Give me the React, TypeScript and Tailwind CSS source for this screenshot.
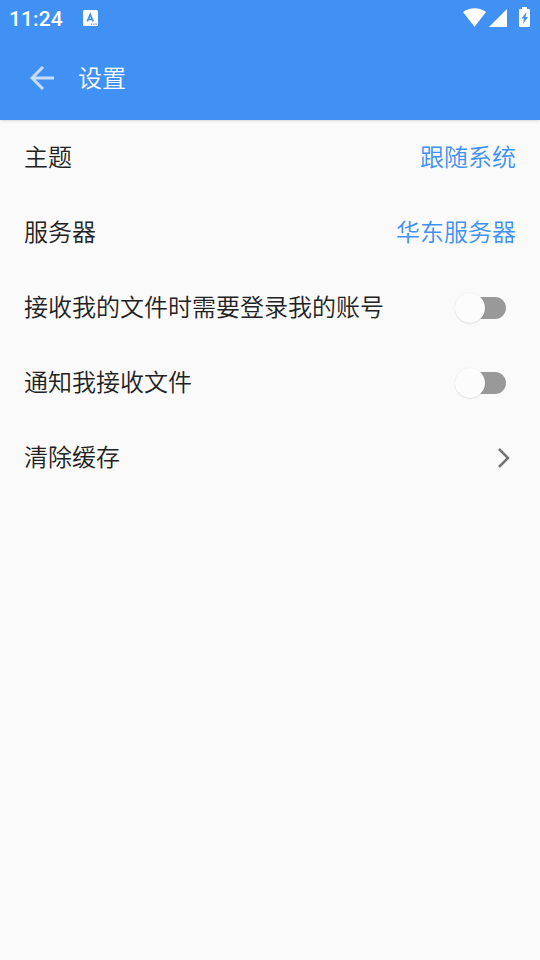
const FONT = "font-[Roboto,'Noto_Sans_CJK_SC',sans-serif]";

type Row = {
  label: string;
  value?: string;
  kind: "value" | "switch" | "link";
};

const ROWS: Row[] = [
  { label: "主题", value: "跟随系统", kind: "value" },
  { label: "服务器", value: "华东服务器", kind: "value" },
  { label: "接收我的文件时需要登录我的账号", kind: "switch" },
  { label: "通知我接收文件", kind: "switch" },
  { label: "清除缓存", kind: "link" },
];

function StatusBar() {
  return (
    <div className="flex h-9 items-center pl-[9px] pr-2.5 text-white">
      <span className="pt-px text-[21px] font-medium leading-9 tracking-[0.1px]">11:24</span>
      <svg className="ml-5 h-4 w-[15px]" viewBox="0 0 15 16">
        <rect width="15" height="16" rx="1.5" fill="#fff" />
        <path d="M4.200 11.500 7.200 4.500l3 7M5.300 9.300h3.800" fill="none" stroke="#4191f4" strokeWidth="1.8" />
        <path d="M8 13.500h1.200v1.200H8zM10.200 13.500h1.200v1.200h-1.200zM12.400 13.500h1.200v1.200h-1.200z" fill="#4191f4" />
      </svg>
      <svg className="-mt-px ml-auto h-[19px] w-[23px]" viewBox="0 0 23 19">
        <path d="M11.500 18.700 0 4C3 1.700 7 0.300 11.500 0.300S20 1.700 23 4z" fill="#fff" />
      </svg>
      <svg className="ml-[3px] h-[18px] w-[18px]" viewBox="0 0 18 18">
        <path d="M0 18 18 0v18z" fill="#fff" />
      </svg>
      <svg className="-mt-0.5 ml-3 h-5 w-[11px]" viewBox="0 0 11 20">
        <path d="M3 0h5v2h2a1 1 0 0 1 1 1v16a1 1 0 0 1-1 1H1a1 1 0 0 1-1-1V3a1 1 0 0 1 1-1h2z" fill="#fff" />
        <path d="M7.500 5 2.500 11.500H5L4 17l5-7H6.500z" fill="#4191f4" />
      </svg>
    </div>
  );
}

function Switch() {
  return (
    <div className="relative mr-2.5 h-[22px] w-[51px]">
      <div className="ml-1 h-[22px] rounded-full bg-[#999]" />
      <div className="absolute -top-1 left-0 size-[30px] rounded-full bg-[#fcfcfc] shadow-[0_0.5px_1.5px_rgba(0,0,0,0.18)]" />
    </div>
  );
}

export default function App() {
  return (
    <div className={`${FONT} h-[960px] w-[540px] bg-[#fafafa] text-[#212121]`}>
      <header className="h-[120px] bg-[#4191f4] shadow-sm">
        <StatusBar />
        <div className="flex h-[84px] items-center pl-[30px] text-white">
          <svg className="size-6 opacity-70" viewBox="0 0 24 24" fill="none" stroke="#fff" strokeWidth="3">
            <path d="M24 12H2M13 1 2 12l11 11" />
          </svg>
          <h1 className="ml-6 pt-0.5 text-2xl font-[350] leading-9">设置</h1>
        </div>
      </header>
      <main className="text-2xl font-[350]">
        {ROWS.map((r) => (
          <div key={r.label} className="flex h-[75px] items-center justify-between px-6">
            <span className="pt-px">{r.label}</span>
            {r.kind === "value" && <span className="pt-px text-[#4191f4]">{r.value}</span>}
            {r.kind === "switch" && <Switch />}
            {r.kind === "link" && (
              <svg className="mr-1.5 h-5 w-3" viewBox="0 0 12 20" fill="none" stroke="#757575" strokeWidth="2.5">
                <path d="m1 1 9 9-9 9" />
              </svg>
            )}
          </div>
        ))}
      </main>
    </div>
  );
}
